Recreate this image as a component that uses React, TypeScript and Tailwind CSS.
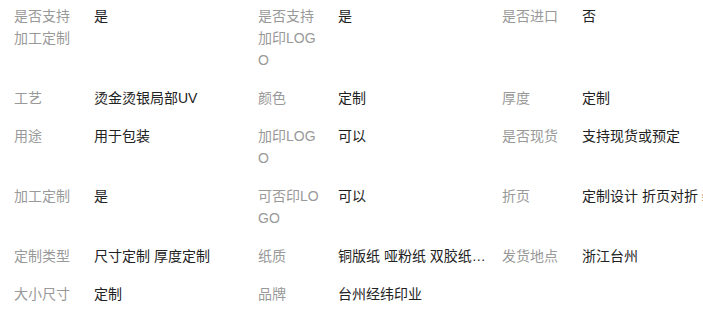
const rows: [string, string][][] = [
  [
    ['是否支持加工定制', '是'],
    ['是否支持加印LOGO', '是'],
    ['是否进口', '否'],
  ],
  [
    ['工艺', '烫金烫银局部UV'],
    ['颜色', '定制'],
    ['厚度', '定制'],
  ],
  [
    ['用途', '用于包装'],
    ['加印LOGO', '可以'],
    ['是否现货', '支持现货或预定'],
  ],
  [
    ['加工定制', '是'],
    ['可否印LOGO', '可以'],
    ['折页', '定制设计 折页对折 装订成册'],
  ],
  [
    ['定制类型', '尺寸定制 厚度定制'],
    ['纸质', '铜版纸 哑粉纸 双胶纸 牛皮纸 白卡纸'],
    ['发货地点', '浙江台州'],
  ],
  [
    ['大小尺寸', '定制'],
    ['品牌', '台州经纬印业'],
  ],
];

export default function App() {
  return (
    <div className="w-[703px] h-[333px] overflow-hidden bg-white font-['Liberation_Sans','Noto_Sans_CJK_SC',sans-serif] text-[14px] leading-[22px]">
      <div className="flex flex-col gap-4 w-[746px] pl-[14px] pt-[5px]">
        {rows.map((row, i) => (
          <div key={i} className="flex items-start">
            {row.map(([label, value]) => (
              <div key={label} className="flex items-start w-[244px] shrink-0">
                <div className="w-[64px] mr-4 shrink-0 text-[#999999] break-all">{label}</div>
                <div className="w-[150px] shrink-0 truncate text-[#222222]">{value}</div>
              </div>
            ))}
          </div>
        ))}
      </div>
    </div>
  );
}
